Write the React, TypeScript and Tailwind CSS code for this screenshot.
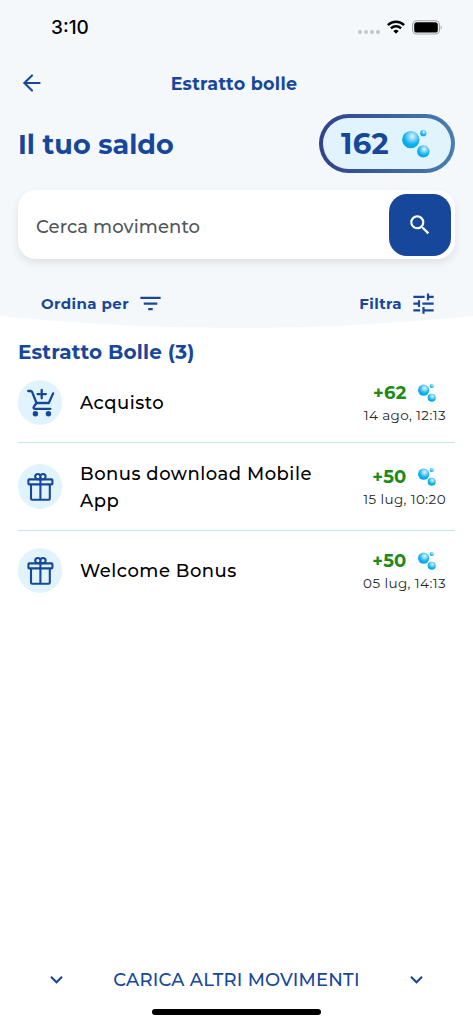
import { ArrowLeft } from "lucide-react";
import { MdFilterList, MdKeyboardArrowDown, MdSearch, MdTune } from "react-icons/md";

type Movement = {
  title: string;
  amount: string;
  date: string;
  icon: "cart" | "gift";
};

const movements: Movement[] = [
  { title: "Acquisto", amount: "+62", date: "14 ago, 12:13", icon: "cart" },
  {
    title: "Bonus download Mobile App",
    amount: "+50",
    date: "15 lug, 10:20",
    icon: "gift",
  },
  { title: "Welcome Bonus", amount: "+50", date: "05 lug, 14:13", icon: "gift" },
];

function Bubbles({ className }: { className: string }) {
  return (
    <svg viewBox="0 0 28 28" className={className}>
      <defs>
        <radialGradient id="bubble" cx="0.58" cy="0.32" r="0.6">
          <stop offset="0" stopColor="#e4f7fe" />
          <stop offset="0.35" stopColor="#83d6f8" />
          <stop offset="0.75" stopColor="#12b2ef" />
          <stop offset="1" stopColor="#05a9ea" />
        </radialGradient>
      </defs>
      <circle cx="8.8" cy="9.6" r="8.7" fill="url(#bubble)" />
      <circle cx="21.3" cy="3.2" r="3.1" fill="url(#bubble)" />
      <circle cx="21.3" cy="21.4" r="6.2" fill="url(#bubble)" />
    </svg>
  );
}

function CartIcon() {
  return (
    <svg
      viewBox="0 0 44 45"
      className="h-[45px] w-[44px]"
      fill="none"
      stroke="#17479b"
      strokeWidth="2.3"
      strokeLinecap="round"
      strokeLinejoin="round"
    >
      <path d="M10.2 11h2.6c.6 0 1 .3 1.3.9L18.5 23h12.3l4.3-9.6" />
      <path d="M18.5 23l-2.6 3.6c-.8 1.2-.1 2.2 1.2 2.2h15.3" />
      <path d="M23.7 9.9v8.4M19.5 14.1h8.4" />
      <circle cx="17.4" cy="33.7" r="2.7" fill="#17479b" stroke="none" />
      <circle cx="30.4" cy="33.7" r="2.7" fill="#17479b" stroke="none" />
    </svg>
  );
}

function GiftIcon() {
  return (
    <svg
      viewBox="0 0 44 45"
      className="h-[45px] w-[44px]"
      fill="none"
      stroke="#17479b"
      strokeWidth="2.1"
      strokeLinejoin="round"
    >
      <rect x="10.4" y="15.4" width="24" height="5" rx="0.8" />
      <path d="M13 20.6v14c0 .7.5 1.2 1.2 1.2h16.4c.7 0 1.2-.5 1.2-1.2v-14M22.4 13v22.8" />
      <path d="M22.4 15.2h-2.6a2.6 2.6 0 1 1 2.6-2.6zM22.4 15.2H25a2.6 2.6 0 1 0-2.6-2.6z" />
    </svg>
  );
}

function StatusBar() {
  return (
    <div className="flex h-[54px] items-center justify-between pr-[31px] pl-[51px]">
      <span className="pt-[2px] font-['Inter',sans-serif] text-[19px] font-medium text-black">
        3:10
      </span>
      <div className="flex items-center">
        <div className="mt-[9px] mr-[7px] flex gap-[2px]">
          <i className="size-1 rounded-full bg-[#c3c6c9]" />
          <i className="size-1 rounded-full bg-[#c3c6c9]" />
          <i className="size-1 rounded-full bg-[#c3c6c9]" />
          <i className="size-1 rounded-full bg-[#c3c6c9]" />
        </div>
        <svg viewBox="0 0 18 14" className="mr-[7px] h-[14px] w-[18px]" fill="none" stroke="#000" strokeWidth="2.4">
          <path d="M.9 5.1a11.6 11.6 0 0 1 16.2 0" />
          <path d="M3.9 8.3a7.3 7.3 0 0 1 10.2 0" />
          <path d="M9 13.7l-2.6-2.6a3.7 3.7 0 0 1 5.2 0z" fill="#000" stroke="none" />
        </svg>
        <svg viewBox="0 0 30 15" className="h-[15px] w-[30px]">
          <rect x="0.6" y="0.8" width="26.8" height="13.2" rx="4" fill="none" stroke="#a2a5a8" strokeWidth="1.1" />
          <rect x="2.2" y="2.3" width="23.6" height="10.2" rx="2.6" fill="#000" />
          <path d="M28.7 5.2c1.3.7 1.3 3.7 0 4.4z" fill="#999c9f" />
        </svg>
      </div>
    </div>
  );
}

function MovementRow({ movement }: { movement: Movement }) {
  return (
    <li className="flex h-[88px] items-center border-b border-[#c4e4fb] first:h-[79px] first:pb-[1px] last:h-[79px] last:border-0">
      <div className="h-[45px] w-[44px] shrink-0 rounded-full bg-[#e1f4fd]">
        {movement.icon === "cart" ? <CartIcon /> : <GiftIcon />}
      </div>
      <p className="ml-[18px] w-[250px] pt-[2px] text-[18px] leading-[26.5px] font-medium tracking-[0.5px] text-black">
        {movement.title}
      </p>
      <div className="ml-auto flex w-[94px] shrink-0 flex-col items-end pt-[1px] pr-[9px]">
        <div className="flex items-center pr-[10.5px]">
          <span className="text-[18px] leading-[24px] font-bold tracking-[0.2px] text-[#208a16]">
            {movement.amount}
          </span>
          <Bubbles className="ml-[11px] size-[18px]" />
        </div>
        <span className="text-[13.5px] leading-[20px] tracking-[0.4px] whitespace-nowrap text-[#262626]">
          {movement.date}
        </span>
      </div>
    </li>
  );
}

export default function App() {
  return (
    <main className="flex h-[1024px] w-[473px] flex-col overflow-hidden bg-white font-['Montserrat','Inter',sans-serif] text-[#17479b]">
      <header className="h-[316px] shrink-0 bg-[#f4f8fb]">
        <StatusBar />
        <nav className="grid h-[58px] grid-cols-[62px_1fr_62px] items-center">
          <ArrowLeft size={26} strokeWidth={1.9} className="ml-[18.5px]" />
          <h1 className="pt-[2px] pr-[5px] text-center text-[17.5px] font-bold tracking-[0.3px] whitespace-nowrap">
            Estratto bolle
          </h1>
        </nav>
        <div className="flex h-[63px] items-center justify-between px-[18px]">
          <h2 className="pt-[3px] text-[27px] font-bold">Il tuo saldo</h2>
          <div className="h-[59px] w-[136px] rounded-full bg-linear-to-r from-[#30418a] to-[#4a7eae] p-[4px]">
            <div className="flex h-full items-center rounded-full bg-[#e1f4fd] pl-[18px]">
              <span className="w-[49px] text-[29px] font-bold tracking-[0.3px] whitespace-nowrap">
                162
              </span>
              <Bubbles className="ml-[11.5px] size-[28px]" />
            </div>
          </div>
        </div>
        <div className="mx-[18px] mt-[15px] flex h-[69px] items-center justify-between rounded-[18px] bg-white pr-1 pl-[18px] shadow-[0_4px_8px_rgba(0,0,0,0.09)]">
          <span className="pt-[5px] text-[18px] font-medium tracking-[0.1px] text-[#50565b]">
            Cerca movimento
          </span>
          <button className="flex size-[62px] items-center justify-center rounded-[18px] bg-[#17479b] text-white">
            <MdSearch size={26} />
          </button>
        </div>
        <div className="mt-[31px] flex h-[27px] items-center justify-between pr-[36px] pl-[41px]">
          <button className="flex items-center gap-[8px] text-[15px] font-bold tracking-[0.4px]">
            <span className="pt-[1px]">Ordina per</span>
            <MdFilterList size={27} />
          </button>
          <button className="flex items-center gap-[8px] text-[15px] font-bold tracking-[0.4px]">
            <span className="pt-[1px]">Filtra</span>
            <MdTune size={27} />
          </button>
        </div>
      </header>
      <svg viewBox="0 0 473 12" className="h-[12px] w-[473px] shrink-0">
        <path d="M0 0Q236.5 24 473 0z" fill="#f4f8fb" />
      </svg>
      <section className="px-[18px] pt-[10px]">
        <h3 className="h-[26px] text-[20px] leading-[29px] font-bold tracking-[0.18px]">
          Estratto Bolle (3)
        </h3>
        <ul>
          {movements.map((movement) => (
            <MovementRow key={movement.date} movement={movement} />
          ))}
        </ul>
      </section>
      <footer className="mt-auto">
        <button className="flex h-[60px] w-full items-center justify-between px-[44px]">
          <MdKeyboardArrowDown size={25} />
          <span className="pt-[2px] text-[18px] font-medium tracking-[0.22px]">
            CARICA ALTRI MOVIMENTI
          </span>
          <MdKeyboardArrowDown size={25} />
        </button>
        <div className="mx-auto mb-[9px] h-[6px] w-[169px] rounded-full bg-black" />
      </footer>
    </main>
  );
}
